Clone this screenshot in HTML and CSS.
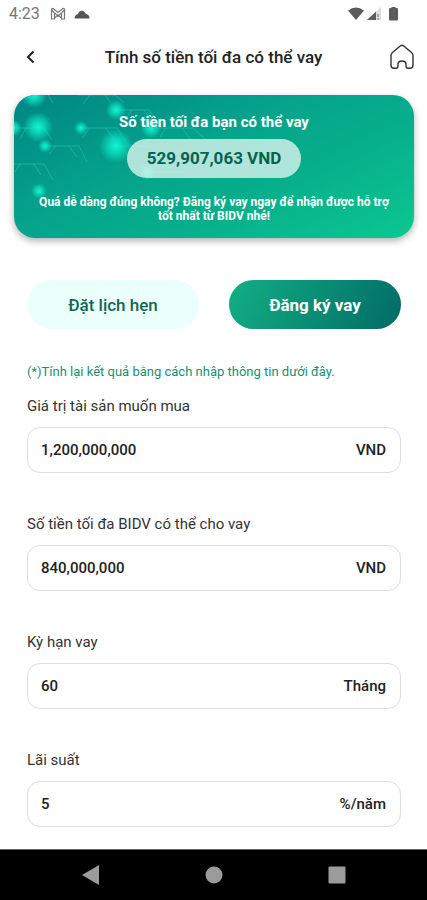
FILE: index.html
```html
<!DOCTYPE html>
<html lang="vi">
<head>
<meta charset="utf-8">
<meta name="viewport" content="width=device-width, initial-scale=1">
<title>Tính số tiền tối đa có thể vay</title>
<link rel="stylesheet" href="styles.css">
</head>
<body>
<div class="status">
  <span class="time">4:23</span>
  <svg class="mail" width="16" height="14" viewBox="0 0 16 14" fill="none" stroke="#777" stroke-width="1.200"><path d="M1.500 2v10h3V6L8 9l3.500-3v6h3V2L13 1.500 8 5.500 3 1.500zM4.500 6l-3-3M11.500 6l3-3M4.500 11 8 8l3.500 3"/></svg>
  <svg width="16" height="14" viewBox="0 0 16 14" fill="#555"><path d="M.5 11.500C.5 9 2 7.500 4 7 5 4 8.500 2.500 11 5.500 11.500 6.500 12 7 13 7.200 15 8 15.500 9.500 15.500 11.500z"/></svg>
  <span class="signals">
    <svg width="16" height="14" viewBox="0 0 16 14" fill="#5c5c5c"><path d="M0 3.500Q8-2.500 16 3.500L8 13z"/></svg>
    <svg width="16" height="14" viewBox="0 0 16 14"><path d="M1 13 15 0v13z" fill="#ddd"/><path d="M1 13 10 4.600V13z" fill="#5c5c5c"/><path d="M12 7v3m0 1v2" stroke="#999" stroke-width="1.500"/></svg>
    <svg class="battery" width="9" height="14" viewBox="0 0 9 14" fill="#5c5c5c"><path d="M0 2q0-1 1-1h1.500V0h4v1H8q1 0 1 1v10.500q0 1-1 1H1q-1 0-1-1z"/></svg>
  </span>
</div>
<header class="topbar">
  <button class="icon-button back" aria-label="Quay lại"><svg width="12" height="16" viewBox="0 0 12 16" fill="none" stroke="#222" stroke-width="2"><path d="M7.500 2.500 2 8 7.500 13.500"/></svg></button>
  <h1>Tính số tiền tối đa có thể vay</h1>
  <button class="icon-button" aria-label="Trang chủ"><svg width="26" height="26" viewBox="0 0 26 26" fill="none" stroke="#333" stroke-width="1.400" stroke-linejoin="round"><path d="M11.500 1.800Q13 .8 14.500 1.800L22.500 8.500Q24 9.800 24 11.500V21Q24 24.200 21 24.200H19Q17 24.200 17 22V19.500Q16.500 17 13 17T9 19.500V22Q9 24.200 7 24.200H5Q2 24.200 2 21V11.500Q2 9.800 3.500 8.500z"/></svg></button>
</header>
<main>
  <section class="card">
    <svg class="circuit" width="200" height="142" viewBox="0 0 200 142" aria-hidden="true">
      <defs><radialGradient id="glow"><stop offset="0" stop-color="#12f5d0"/><stop offset=".35" stop-color="#0de5c4" stop-opacity=".85"/><stop offset="1" stop-color="#0de5c4" stop-opacity="0"/></radialGradient></defs>
      <g fill="none" stroke="#20c9b4" stroke-opacity=".6">
        <path d="M0 33h30l8 12M12 33l-6 11M67 33h36l11 17M76 33l-8 10M92 33l8 12M32 51h33l8 16M42 51l-7 8M55 51l8 11M0 69h30l9 16M6 69l-5 8M20 69l7 11M102 15h33l12 17M118 15l-7 10M130 15l7 10M34 0l5 8M65 0h36l9 8M76 0l-7 9M91 0l6 8M102 51h34M137 33h42l12 11M152 33l-6 9M168 33l8 11M133 77h40"/>
      </g>
      <g fill="url(#glow)"><circle cx="20" cy="0" r="13"/><circle cx="24" cy="32" r="15"/><circle cx="0" cy="33" r="8"/><circle cx="67" cy="33" r="7"/><circle cx="102" cy="15" r="10"/><circle cx="102" cy="51" r="17"/><circle cx="31" cy="51" r="7"/><circle cx="25" cy="96" r="8"/><circle cx="137" cy="33" r="10"/><circle cx="133" cy="77" r="8"/></g>
    </svg>
    <h2>Số tiền tối đa bạn có thể vay</h2>
    <strong class="amount">529,907,063 VND</strong>
    <p>Quá dễ dàng đúng không? Đăng ký vay ngay để nhận được hỗ trợ tốt nhất từ BIDV nhé!</p>
  </section>
  <div class="actions">
    <button class="action soft">Đặt lịch hẹn</button>
    <button class="action strong">Đăng ký vay</button>
  </div>
  <form class="form">
    <p class="note">(*)Tính lại kết quả bằng cách nhập thông tin dưới đây.</p>
    <div class="field"><label for="asset">Giá trị tài sản muốn mua</label><div class="box"><input id="asset" value="1,200,000,000"><span>VND</span></div></div>
    <div class="field"><label for="loan">Số tiền tối đa BIDV có thể cho vay</label><div class="box"><input id="loan" value="840,000,000"><span>VND</span></div></div>
    <div class="field"><label for="term">Kỳ hạn vay</label><div class="box"><input id="term" value="60"><span>Tháng</span></div></div>
    <div class="field"><label for="rate">Lãi suất</label><div class="box"><input id="rate" value="5"><span>%/năm</span></div></div>
  </form>
</main>
<nav class="system-nav">
  <button aria-label="Trở về"><svg width="18" height="20" viewBox="0 0 18 20" fill="#9b9b9b"><path d="M0 10 17 0v20z"/></svg></button>
  <button aria-label="Màn hình chính"><svg width="18" height="18" viewBox="0 0 18 18" fill="#9b9b9b"><circle cx="9" cy="9" r="8.500"/></svg></button>
  <button aria-label="Gần đây"><svg width="18" height="18" viewBox="0 0 18 18" fill="#9b9b9b"><rect x=".5" y=".5" width="17" height="17" rx="1"/></svg></button>
</nav>
</body>
</html>
```
FILE: styles.css
```css
* { box-sizing: border-box; }
body {
  margin: 0;
  min-height: 100vh;
  display: flex;
  flex-direction: column;
  background: #fff;
  color: #222;
  font-family: Roboto, "Noto Sans", sans-serif;
}
button { border: 0; padding: 0; background: none; font: inherit; color: inherit; }
svg { display: block; flex: none; }
h1, h2, p { margin: 0; }

.status {
  display: flex;
  align-items: center;
  height: 28px;
  padding: 0 29px 0 9px;
  gap: 8px;
}
.time { font-size: 16px; line-height: 20px; color: #777; }
.mail { margin-left: 2px; }
.signals { display: flex; gap: 2px; margin-left: auto; }
.battery { margin-left: 5px; }

.topbar {
  display: flex;
  align-items: center;
  justify-content: space-between;
  height: 58px;
  padding: 0 12px;
}
.icon-button { display: grid; place-items: center; width: 26px; height: 32px; }
.back { justify-items: end; }
h1 { font-size: 17px; line-height: 24px; font-weight: 500; }

main { flex: 1; padding-top: 9px; }
.card {
  position: relative;
  overflow: hidden;
  display: flex;
  flex-direction: column;
  align-items: center;
  margin: 0 13px 0 14px;
  padding: 16px 20px 15px;
  border-radius: 21px;
  background: linear-gradient(155deg, #008584 0%, #05a38b 40%, #07af8b 65%, #0cc791 100%);
  box-shadow: 0 3px 7px rgba(0, 0, 0, .3);
  color: #fff;
  text-align: center;
}
.circuit { position: absolute; top: 0; left: 0; }
.card h2 { position: relative; font-size: 15px; line-height: 22px; font-weight: 700; }
.amount {
  position: relative;
  margin: 6px 0 17px;
  padding: 0 20px;
  border-radius: 20px;
  background: rgba(218, 244, 238, .8);
  color: #08624f;
  font-size: 17px;
  line-height: 39px;
}
.card p { position: relative; font-size: 12px; line-height: 14px; font-weight: 700; }

.actions { display: grid; grid-template-columns: 1fr 1fr; gap: 30px; margin: 42px 26px 0 27px; }
.action { height: 49px; border-radius: 25px; font-size: 17px; font-weight: 500; }
.soft { background: #ebfffb; color: #126650; }
.strong { background: linear-gradient(115deg, #12af84, #016b65); color: #fff; font-weight: 700; }

.form { padding: 33px 26px 0 27px; }
.note { margin-bottom: 14px; font-size: 13px; line-height: 20px; color: #168f75; }
.field { margin-bottom: 41px; }
.field:last-child { margin-bottom: 0; }
label { display: block; margin-bottom: 11px; font-size: 15px; line-height: 20px; color: #333; }
.box {
  display: flex;
  align-items: center;
  height: 46px;
  padding: 0 14px 0 13px;
  border: 1px solid #ddd;
  border-radius: 13px;
  font-size: 15px;
  font-weight: 500;
}
input { flex: 1; min-width: 0; padding: 0; border: 0; outline: 0; background: none; font: inherit; color: inherit; }

.system-nav {
  display: grid;
  grid-template-columns: repeat(3, 123px);
  justify-content: center;
  height: 51px;
  background: #000;
  border-top: 1px solid #666;
}
.system-nav button { display: grid; place-items: center; }
```
